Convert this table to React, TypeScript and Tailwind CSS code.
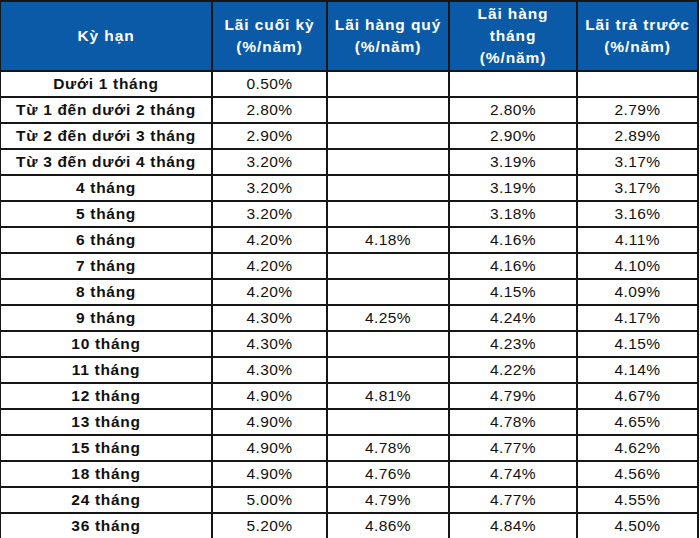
const rows: [string, string, string, string, string][] = [
  ["Dưới 1 tháng", "0.50%", "", "", ""],
  ["Từ 1 đến dưới 2 tháng", "2.80%", "", "2.80%", "2.79%"],
  ["Từ 2 đến dưới 3 tháng", "2.90%", "", "2.90%", "2.89%"],
  ["Từ 3 đến dưới 4 tháng", "3.20%", "", "3.19%", "3.17%"],
  ["4 tháng", "3.20%", "", "3.19%", "3.17%"],
  ["5 tháng", "3.20%", "", "3.18%", "3.16%"],
  ["6 tháng", "4.20%", "4.18%", "4.16%", "4.11%"],
  ["7 tháng", "4.20%", "", "4.16%", "4.10%"],
  ["8 tháng", "4.20%", "", "4.15%", "4.09%"],
  ["9 tháng", "4.30%", "4.25%", "4.24%", "4.17%"],
  ["10 tháng", "4.30%", "", "4.23%", "4.15%"],
  ["11 tháng", "4.30%", "", "4.22%", "4.14%"],
  ["12 tháng", "4.90%", "4.81%", "4.79%", "4.67%"],
  ["13 tháng", "4.90%", "", "4.78%", "4.65%"],
  ["15 tháng", "4.90%", "4.78%", "4.77%", "4.62%"],
  ["18 tháng", "4.90%", "4.76%", "4.74%", "4.56%"],
  ["24 tháng", "5.00%", "4.79%", "4.77%", "4.55%"],
  ["36 tháng", "5.20%", "4.86%", "4.84%", "4.50%"],
];

const headers = [
  ["Kỳ hạn"],
  ["Lãi cuối kỳ", "(%/năm)"],
  ["Lãi hàng quý", "(%/năm)"],
  ["Lãi hàng", "tháng", "(%/năm)"],
  ["Lãi trả trước", "(%/năm)"],
];

export default function App() {
  return (
    <div className="w-[700px] h-[538px] overflow-hidden bg-white font-['Liberation_Sans',Arial,sans-serif] text-[15.5px] text-[#111]">
      <table className="w-[698px] table-fixed border-collapse -ml-px">
        <colgroup>
          <col className="w-[212px]" />
          <col className="w-[115px]" />
          <col className="w-[122px]" />
          <col className="w-[128px]" />
          <col className="w-[121px]" />
        </colgroup>
        <thead>
          <tr className="h-[70px] bg-[#0b5aa7]">
            {headers.map((h, i) => (
              <th
                key={i}
                className="border-2 border-[#161616] text-center align-middle font-bold text-white tracking-[0.9px] leading-[22px] p-0"
              >
                {h.map((line, j) => (
                  <div key={j}>{line}</div>
                ))}
              </th>
            ))}
          </tr>
        </thead>
        <tbody>
          {rows.map((r, i) => (
            <tr key={i} className="h-[26px]">
              <td className="border-2 border-[#161616] text-center font-bold tracking-[0.7px] p-0 pb-px leading-[20px]">
                {r[0]}
              </td>
              {r.slice(1).map((v, j) => (
                <td
                  key={j}
                  className="border-2 border-[#161616] text-center tracking-[0.4px] p-0 pb-px leading-[20px]"
                >
                  {v}
                </td>
              ))}
            </tr>
          ))}
        </tbody>
      </table>
    </div>
  );
}
